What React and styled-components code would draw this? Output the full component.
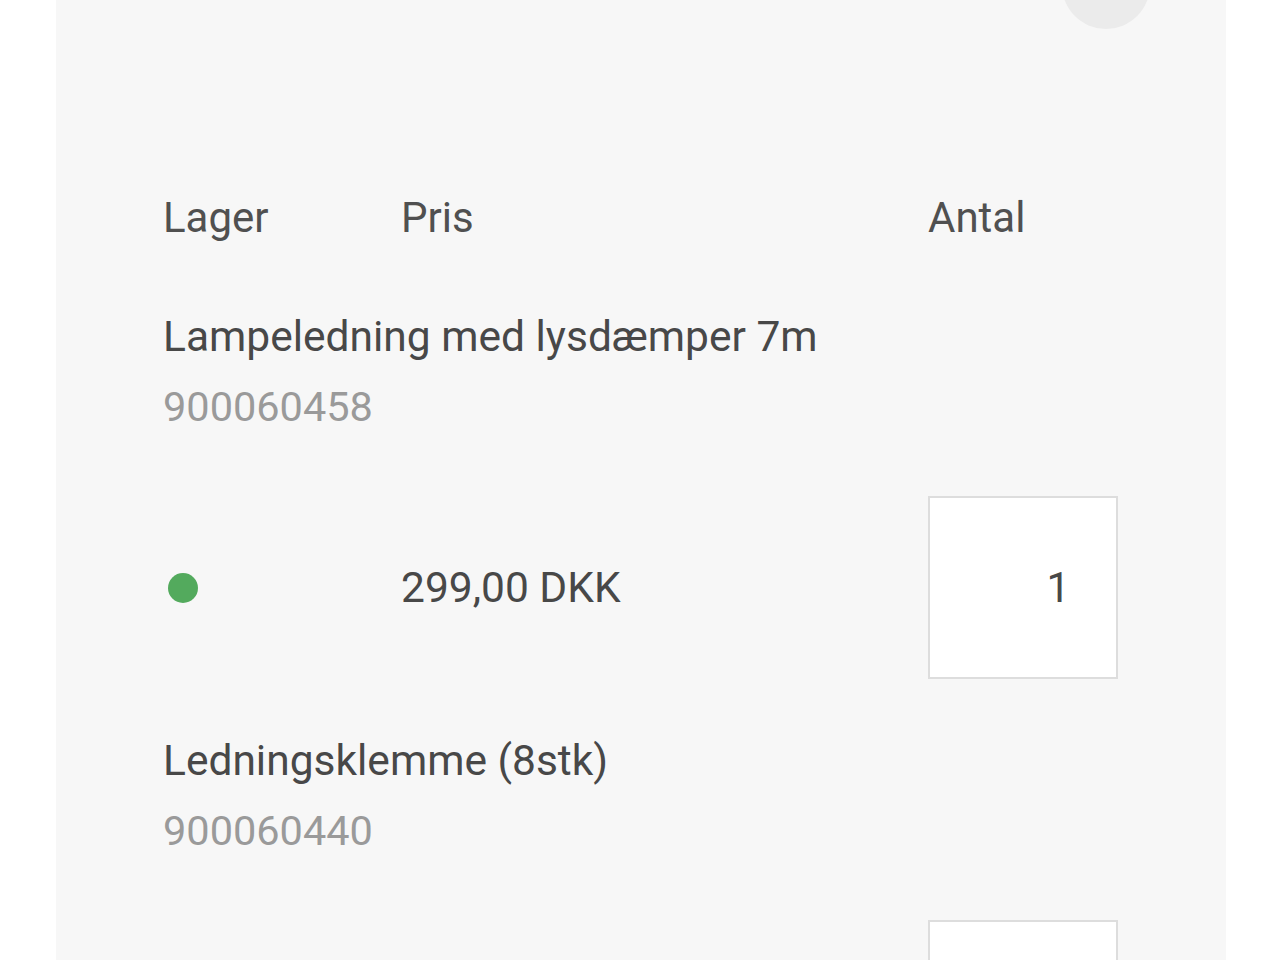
import styled, { createGlobalStyle } from 'styled-components';

const GlobalStyle = createGlobalStyle`
  * {
    margin: 0;
    padding: 0;
    box-sizing: border-box;
  }
  html, body, #root {
    width: 100%;
    height: 100%;
    background-color: #ffffff;
    font-family: "Roboto", "DejaVu Sans", sans-serif;
    overflow: hidden;
  }
`;

const Panel = styled.div`
  position: relative;
  margin: 0 54px 0 56px;
  min-height: 100%;
  background-color: #f7f7f7;
  padding: 191px 109px 0 107px;
`;

const CloseCircle = styled.div`
  position: absolute;
  top: -59px;
  right: 76px;
  width: 88px;
  height: 88px;
  border-radius: 50%;
  background-color: #ebebeb;
`;

const Columns = styled.div`
  display: grid;
  grid-template-columns: 238px 527px 1fr;
  align-items: center;
`;

const HeaderRow = styled(Columns)`
  font-size: 42px;
  line-height: 53px;
  color: #505050;
`;

const Items = styled.div`
  display: flex;
  flex-direction: column;
  gap: 47px;
  margin-top: 58px;
`;

const Item = styled.div`
  display: flex;
  flex-direction: column;
  gap: 54px;
`;

const Name = styled.div`
  font-size: 42.5px;
  line-height: 70px;
  color: #484848;
`;

const Sku = styled.div`
  font-size: 41.5px;
  line-height: 70px;
  color: #9a9a9a;
`;

const StockDot = styled.span`
  display: block;
  width: 30px;
  height: 30px;
  margin-left: 5px;
  border-radius: 50%;
  background-color: ${(p) => (p.$inStock ? '#53aa5d' : '#d9534f')};
`;

const Price = styled.div`
  font-size: 42.5px;
  line-height: 53px;
  color: #484848;
`;

const QtyInput = styled.input`
  width: 190px;
  height: 183px;
  border: 2px solid #dddddd;
  background: #ffffff;
  text-align: right;
  padding-right: 46px;
  font-family: inherit;
  font-size: 42px;
  color: #484848;
  outline: none;
`;

const products = [
  { name: 'Lampeledning med lysdæmper 7m', sku: '900060458', price: '299,00 DKK', qty: 1 },
  { name: 'Ledningsklemme (8stk)', sku: '900060440', price: '49,00 DKK', qty: 1 },
];

export default function App() {
  return (
    <>
      <GlobalStyle />
      <Panel>
        <CloseCircle />
        <HeaderRow>
          <div>Lager</div>
          <div>Pris</div>
          <div>Antal</div>
        </HeaderRow>
        <Items>
          {products.map((p) => (
            <Item key={p.sku}>
              <div>
                <Name>{p.name}</Name>
                <Sku>{p.sku}</Sku>
              </div>
              <Columns>
                <StockDot $inStock />
                <Price>{p.price}</Price>
                <QtyInput type="text" defaultValue={p.qty} />
              </Columns>
            </Item>
          ))}
        </Items>
      </Panel>
    </>
  );
}
